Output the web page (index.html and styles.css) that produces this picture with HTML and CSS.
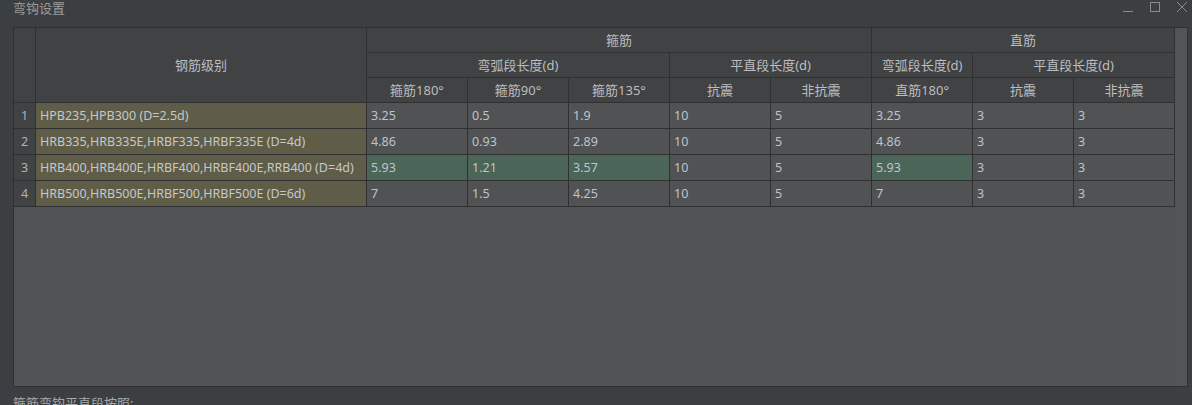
FILE: index.html
```html
<!DOCTYPE html>
<html lang="zh">
<head>
<meta charset="utf-8">
<title>弯钩设置</title>
<link rel="stylesheet" href="styles.css">
</head>
<body>
<div class="window">
  <div class="titlebar">
    <span class="title">弯钩设置</span>
    <div class="controls">
      <svg class="ctl" width="12" height="12" viewBox="0 0 12 12"><path d="M1 10.5H11" stroke="#8a8c8e" stroke-width="1"/></svg>
      <svg class="ctl" width="12" height="12" viewBox="0 0 12 12"><rect x="1.5" y="1.5" width="9" height="9" fill="none" stroke="#8a8c8e" stroke-width="1"/></svg>
      <svg class="ctl" width="12" height="12" viewBox="0 0 12 12"><path d="M1 1L11 11M11 1L1 11" stroke="#8a8c8e" stroke-width="1"/></svg>
    </div>
  </div>
  <div class="grid-box">
    <div class="grid-scroll">
      <table class="grid">
        <colgroup>
          <col class="c-num"><col class="c-level">
          <col class="c-val"><col class="c-val"><col class="c-val"><col class="c-val">
          <col class="c-val"><col class="c-val"><col class="c-val"><col class="c-val">
        </colgroup>
        <thead>
          <tr>
            <th rowspan="3" class="hnum"></th>
            <th rowspan="3">钢筋级别</th>
            <th colspan="5">箍筋</th>
            <th colspan="3">直筋</th>
          </tr>
          <tr>
            <th colspan="3">弯弧段长度(d)</th>
            <th colspan="2">平直段长度(d)</th>
            <th>弯弧段长度(d)</th>
            <th colspan="2">平直段长度(d)</th>
          </tr>
          <tr>
            <th>箍筋180°</th><th>箍筋90°</th><th>箍筋135°</th><th>抗震</th><th>非抗震</th>
            <th>直筋180°</th><th>抗震</th><th>非抗震</th>
          </tr>
        </thead>
        <tbody>
          <tr>
            <td class="num">1</td><td class="level">HPB235,HPB300 (D=2.5d)</td>
            <td>3.25</td><td>0.5</td><td>1.9</td><td>10</td><td>5</td><td>3.25</td><td>3</td><td>3</td>
          </tr>
          <tr>
            <td class="num">2</td><td class="level">HRB335,HRB335E,HRBF335,HRBF335E (D=4d)</td>
            <td>4.86</td><td>0.93</td><td>2.89</td><td>10</td><td>5</td><td>4.86</td><td>3</td><td>3</td>
          </tr>
          <tr>
            <td class="num">3</td><td class="level">HRB400,HRB400E,HRBF400,HRBF400E,RRB400 (D=4d)</td>
            <td class="hl">5.93</td><td class="hl">1.21</td><td class="hl">3.57</td><td>10</td><td>5</td><td class="hl">5.93</td><td>3</td><td>3</td>
          </tr>
          <tr>
            <td class="num">4</td><td class="level">HRB500,HRB500E,HRBF500,HRBF500E (D=6d)</td>
            <td>7</td><td>1.5</td><td>4.25</td><td>10</td><td>5</td><td>7</td><td>3</td><td>3</td>
          </tr>
        </tbody>
      </table>
    </div>
    <div class="vscroll"></div>
  </div>
  <div class="footer-label">箍筋弯钩平直段按照:</div>
</div>
</body>
</html>
```
FILE: styles.css
```css
* { box-sizing: border-box; }
html, body {
  margin: 0;
  padding: 0;
  height: 100%;
  overflow: hidden;
}
body {
  background: #3c3f41;
  font-family: "Noto Sans", "Noto Sans CJK SC", sans-serif;
  color: #bbbdbf;
}
.window {
  display: flex;
  flex-direction: column;
  height: 405px;
  padding: 0 4px 0 13px;
}
.titlebar {
  flex: none;
  height: 27px;
  display: flex;
  align-items: flex-start;
  justify-content: space-between;
}
.title {
  font-size: 13px;
  color: #9a9c9e;
  line-height: 16px;
}
.controls {
  display: flex;
  gap: 15px;
  margin-top: 1px;
}
.ctl { display: block; }
.grid-box {
  flex: none;
  width: 1175px;
  height: 360px;
  background: #525355;
  border: 1px solid #2f3133;
  display: flex;
}
.grid-scroll {
  width: 1161px;
  flex: none;
}
.vscroll {
  flex: 1;
  background: #535456;
}
.grid {
  border-collapse: collapse;
  table-layout: fixed;
  width: 1161px;
  margin-top: -1px;
  margin-left: -1px;
  font-size: 13px;
}
.c-num { width: 22px; }
.c-level { width: 331px; }
.c-val { width: 101px; }
.grid th, .grid td {
  border: 1px solid #2e3032;
  padding: 0;
  white-space: nowrap;
  overflow: hidden;
  line-height: 16px;
}
.grid th {
  background: #404244;
  font-weight: normal;
  color: #bcbec0;
  height: 25px;
  text-align: center;
}
.grid td {
  height: 26px;
  background: #515254;
  padding-left: 4px;
  color: #bcc4cc;
  font-size: 12.5px;
}
.grid td.num {
  background: #404244;
  text-align: left;
  padding-left: 7px;
  color: #b0b2b4;
}
.grid td.level {
  background: #5f5d47;
  color: #c4c8cc;
}
.grid td.hl {
  background: #4b6658;
}
.footer-label {
  flex: none;
  margin-top: 8px;
  font-size: 13px;
  color: #a6a8aa;
  line-height: 16px;
}
```
